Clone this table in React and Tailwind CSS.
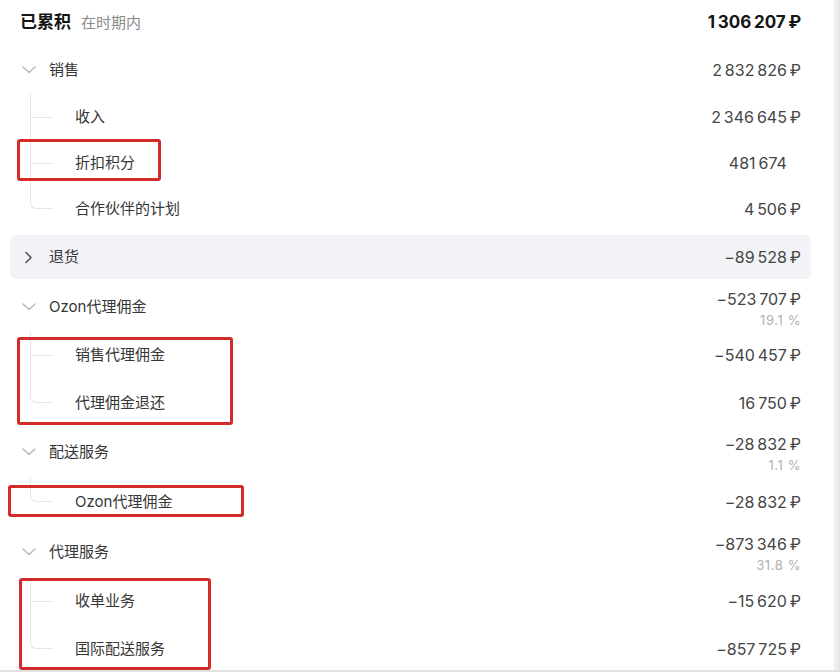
import React from "react";

const font = { fontFamily: '"Inter", "Noto Sans CJK SC", sans-serif' };

function ChevronDown() {
  return (
    <svg width="14" height="8" viewBox="0 0 14 8" className="shrink-0">
      <polyline points="1,1 7,6.5 13,1" fill="none" stroke="#b5b5b5" strokeWidth="1.3" strokeLinecap="round" strokeLinejoin="round" />
    </svg>
  );
}

function ChevronRight() {
  return (
    <svg width="9" height="13" viewBox="0 0 9 13" className="shrink-0">
      <polyline points="2,1.5 7,6.5 2,11.5" fill="none" stroke="#555" strokeWidth="1.6" strokeLinecap="round" strokeLinejoin="round" />
    </svg>
  );
}

function Amount({ value, noSign, bold }) {
  return (
    <span
      className={
        bold
          ? "text-[17px] font-bold text-[#151515] tracking-[0.2px]"
          : "text-[16px] text-[#454545] tracking-[0.3px]"
      }
    >
      {value}
      <span className={noSign ? "invisible" : ""}>{"\u202F₽"}</span>
    </span>
  );
}

function GroupRow({ label, amount, pct, h, open = true, shaded }) {
  return (
    <div
      className={`flex items-center justify-between px-[10px] ${h} ${
        shaded ? "bg-[#f2f3f6] rounded-[6px]" : ""
      }`}
    >
      <div className="flex items-center">
        <div className="w-[29px] flex items-center pl-[2px]">
          {open ? <ChevronDown /> : <span className="pl-[2px]"><ChevronRight /></span>}
        </div>
        <span className="text-[15px] text-[#363636]">{label}</span>
      </div>
      <div className="flex flex-col items-end">
        <Amount value={amount} />
        {pct && (
          <span className="text-[13px] text-[#b0b0b0] leading-[16px] mt-[1px] tracking-[0.6px]">{pct}</span>
        )}
      </div>
    </div>
  );
}

function ChildRow({ label, amount, last, h, noSign }) {
  return (
    <div className={`flex items-center justify-between px-[10px] ${h}`}>
      <div className="flex items-center self-stretch">
        <div className="relative w-[55px] self-stretch">
          {last ? (
            <div className="absolute left-[10px] top-0 h-1/2 w-[23px] border-l border-b border-[#e6e6e6] rounded-bl-[6px]" />
          ) : (
            <>
              <div className="absolute left-[10px] top-0 bottom-0 border-l border-[#e6e6e6]" />
              <div className="absolute left-[10px] top-1/2 w-[23px] border-t border-[#e6e6e6]" />
            </>
          )}
        </div>
        <span className="text-[15px] text-[#363636] self-center">{label}</span>
      </div>
      <Amount value={amount} noSign={noSign} />
    </div>
  );
}

export default function App() {
  const s = "\u202F";
  const m = "\u2212";
  return (
    <div style={font} className="relative w-[840px] h-[672px] bg-white overflow-hidden flex">
      <div className="w-[833px] flex flex-col">
        <div className="ml-[10px] w-[801px] flex flex-col">
          <div className="flex items-center justify-between px-[10px] h-[46px]">
            <div className="flex items-baseline">
              <span className="text-[17px] font-bold text-[#151515]">已累积</span>
              <span className="text-[15px] text-[#8a8a8a] ml-[10px]">在时期内</span>
            </div>
            <Amount value={`1${s}306${s}207`} bold />
          </div>

          <GroupRow label="销售" amount={`2${s}832${s}826`} h="h-[48px]" />
          <ChildRow label="收入" amount={`2${s}346${s}645`} h="h-[46px]" />
          <ChildRow label="折扣积分" amount={`481${s}674`} h="h-[46px]" noSign />
          <ChildRow label="合作伙伴的计划" amount={`4${s}506`} h="h-[46px]" last />

          <div className="h-[3px]" />
          <GroupRow label="退货" amount={`${m}89${s}528`} h="h-[44px]" open={false} shaded />
          <div className="h-[4px]" />

          <GroupRow label="Ozon代理佣金" amount={`${m}523${s}707`} pct="19.1 %" h="h-[48px]" />
          <ChildRow label="销售代理佣金" amount={`${m}540${s}457`} h="h-[48px]" />
          <ChildRow label="代理佣金退还" amount={`16${s}750`} h="h-[48px]" last />

          <GroupRow label="配送服务" amount={`${m}28${s}832`} pct="1.1 %" h="h-[50px]" />
          <ChildRow label="Ozon代理佣金" amount={`${m}28${s}832`} h="h-[50px]" last />

          <GroupRow label="代理服务" amount={`${m}873${s}346`} pct="31.8 %" h="h-[50px]" />
          <ChildRow label="收单业务" amount={`${m}15${s}620`} h="h-[48px]" />
          <ChildRow label="国际配送服务" amount={`${m}857${s}725`} h="h-[48px]" last />
        </div>
      </div>
      <div className="w-[7px] bg-gradient-to-r from-[#f6f6f6] to-[#e4e4e4]" />

      {/* red annotation boxes */}
      <div className="absolute left-[17px] top-[139px] w-[144px] h-[42px] border-[3px] border-[#d32a2a] rounded-[3px]" />
      <div className="absolute left-[17px] top-[337px] w-[216px] h-[88px] border-[3px] border-[#d32a2a] rounded-[3px]" />
      <div className="absolute left-[8px] top-[485px] w-[236px] h-[32px] border-[3px] border-[#d32a2a] rounded-[3px]" />
      <div className="absolute left-[19px] top-[578px] w-[192px] h-[92px] border-[3px] border-[#d32a2a] rounded-[3px]" />
      <div className="absolute left-0 bottom-0 w-full h-[2px] bg-[#e2e2e2]" />
    </div>
  );
}
